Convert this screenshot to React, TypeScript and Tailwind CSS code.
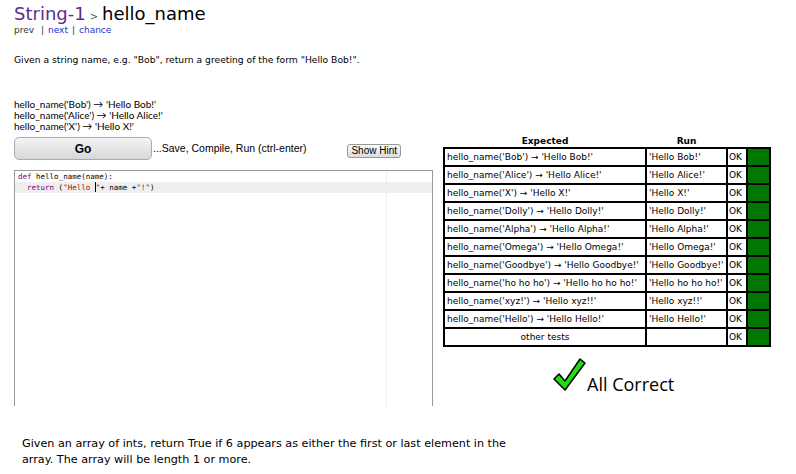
const rows: [string, string][] = [
  ["hello_name('Bob') → 'Hello Bob!'", "'Hello Bob!'"],
  ["hello_name('Alice') → 'Hello Alice!'", "'Hello Alice!'"],
  ["hello_name('X') → 'Hello X!'", "'Hello X!'"],
  ["hello_name('Dolly') → 'Hello Dolly!'", "'Hello Dolly!'"],
  ["hello_name('Alpha') → 'Hello Alpha!'", "'Hello Alpha!'"],
  ["hello_name('Omega') → 'Hello Omega!'", "'Hello Omega!'"],
  ["hello_name('Goodbye') → 'Hello Goodbye!'", "'Hello Goodbye!'"],
  ["hello_name('ho ho ho') → 'Hello ho ho ho!'", "'Hello ho ho ho!'"],
  ["hello_name('xyz!') → 'Hello xyz!!'", "'Hello xyz!!'"],
  ["hello_name('Hello') → 'Hello Hello!'", "'Hello Hello!'"],
];

const verdana = "font-['DejaVu_Sans',sans-serif]";

const Check = () => (
  <svg width="34" height="36" viewBox="0 0 34 36">
    <path
      d="M2 22 L7 17 L13 24 L28 2 L33 6 L13 33 Z"
      fill="#22dd11"
      stroke="#000"
      strokeWidth="1.5"
      strokeLinejoin="round"
    />
  </svg>
);

export default function App() {
  return (
    <div className={`w-[796px] h-[474px] overflow-hidden bg-white text-black ${verdana}`}>
      <div className="pl-[14px] pt-[4px]">
        <div className="flex items-baseline text-[18px] leading-[19px]">
          <span className="text-[#5c2d91]">String-1</span>
          <span className="text-[10px] text-[#555] mx-[4px]">&gt;</span>
          <span>hello_name</span>
        </div>
        <div className="text-[9px] leading-[9px] text-[#333]">
          prev <span className="mx-[4px]">|</span>
          <span className="text-[#2233cc]">next</span>
          <span className="mx-[4px]">|</span>
          <span className="text-[#2233cc]">chance</span>
        </div>
        <p className="mt-[19px] text-[9.2px] leading-[12px]">
          Given a string name, e.g. "Bob", return a greeting of the form "Hello Bob!".
        </p>
        <div className="mt-[33px] font-['Lato',sans-serif] text-[10px] leading-[11px]">
          <div>hello_name('Bob') → 'Hello Bob!'</div>
          <div>hello_name('Alice') → 'Hello Alice!'</div>
          <div>hello_name('X') → 'Hello X!'</div>
        </div>
      </div>

      <div className="flex mt-[5px]">
        <div className="pl-[14px] w-[443px]">
          <div className="flex items-center">
            <button className="w-[138px] h-[23px] rounded-[5px] border border-[#aaa] bg-gradient-to-b from-[#f4f4f4] to-[#d8d8d8] font-['Liberation_Sans',sans-serif] font-bold text-[12px]">
              Go
            </button>
            <span className="ml-[1px] font-['Liberation_Sans',sans-serif] text-[10.5px]">
              ...Save, Compile, Run (ctrl-enter)
            </span>
            <button className="ml-auto mr-[42px] mt-[5px] h-[14px] px-[3px] rounded-[3px] border border-[#999] bg-gradient-to-b from-[#fafafa] to-[#ddd] font-['Liberation_Sans',sans-serif] text-[10px] leading-[12px]">
              Show Hint
            </button>
          </div>
          <div className="relative mt-[10px] w-[419px] h-[236px] border border-b-0 border-[#999] font-['DejaVu_Sans_Mono',monospace] text-[7.5px] leading-[10px] pt-[1px]">
            <div className="absolute left-[371px] top-0 bottom-0 w-px bg-[#eee]" />
            <div className="pl-[3px]">
              <span className="text-[#770088]">def</span> hello_name(name):
            </div>
            <div className="pl-[3px] bg-[#efefef]">
              <span className="text-[#770088] ml-[9px]">return</span> (
              <span className="text-[#aa1111]">"Hello </span>
              <span className="inline-block w-px h-[10px] bg-black align-[-2px]" />
              <span className="text-[#aa1111]">"</span>+ name +<span className="text-[#aa1111]">"!"</span>)
            </div>
          </div>
        </div>

        <div className="w-[330px] -mt-[2px]">
          <table className="table-fixed w-[326px] border-collapse text-[9px] leading-[12px]">
            <thead>
              <tr>
                <th className="w-[202px] h-[12px] font-bold">Expected</th>
                <th className="w-[81px] font-bold">Run</th>
                <th className="w-[20px]" />
                <th className="w-[23px]" />
              </tr>
            </thead>
            <tbody>
              {rows.map(([e, r]) => (
                <tr key={e} className="h-[18px]">
                  <td className="border-2 border-black pl-[2px] whitespace-nowrap overflow-hidden">{e}</td>
                  <td className="border-2 border-black pl-[2px] whitespace-nowrap overflow-hidden">{r}</td>
                  <td className="border-2 border-black pl-[1px]">OK</td>
                  <td className="border-2 border-black bg-[#007700]" />
                </tr>
              ))}
              <tr className="h-[18px]">
                <td className="border-2 border-black text-center">other tests</td>
                <td className="border-2 border-black" />
                <td className="border-2 border-black pl-[1px]">OK</td>
                <td className="border-2 border-black bg-[#007700]" />
              </tr>
            </tbody>
          </table>
          <div className="flex items-end ml-[109px] mt-[10px]">
            <Check />
            <span className="ml-[1px] text-[18px] leading-[18px] font-['Open_Sans',sans-serif]">All Correct</span>
          </div>
        </div>
      </div>

      <p className="pl-[22px] mt-[30px] w-[530px] text-[11.2px] leading-[16px]">
        Given an array of ints, return True if 6 appears as either the first or last element in the
        array. The array will be length 1 or more.
      </p>
    </div>
  );
}
